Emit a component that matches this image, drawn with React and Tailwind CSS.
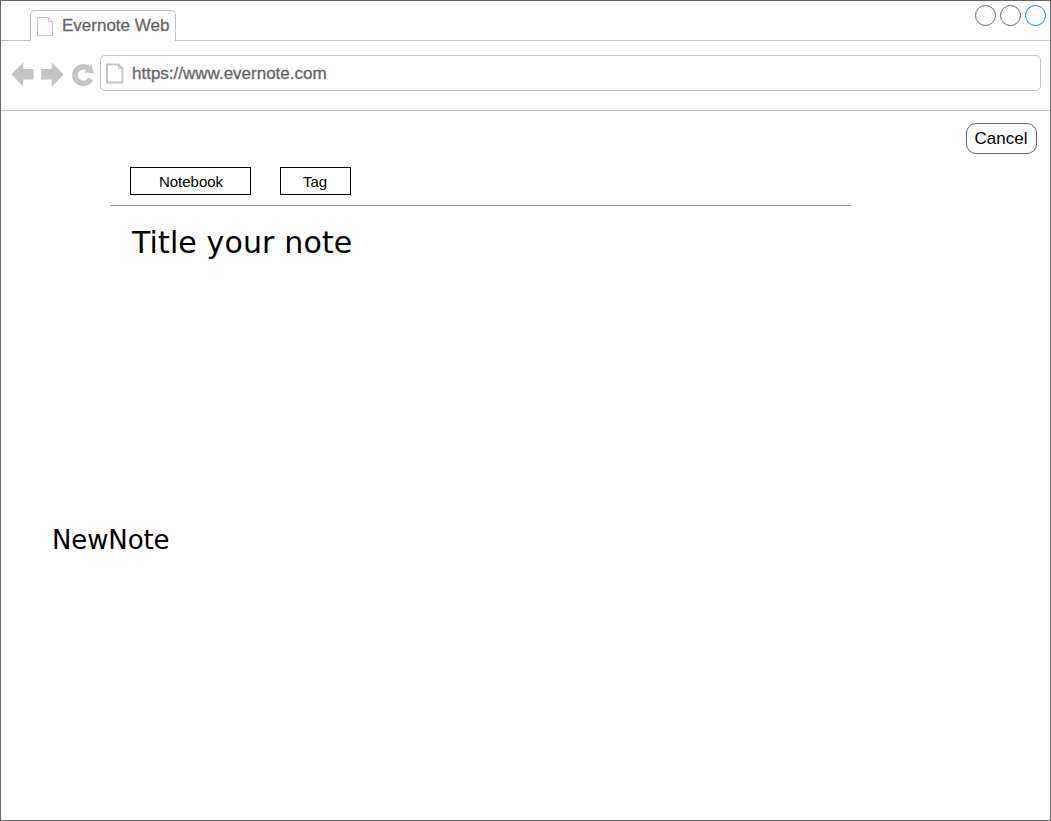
import React from "react";

function PageIcon({ className, strokeWidth }) {
  return (
    <svg className={className} viewBox="0 0 18 21" fill="none" stroke="#c4c4c4" strokeWidth={strokeWidth}>
      <path d="M1 1.5H12.5L16.5 5.5V19.5H1Z" />
      <path d="M12.5 1.5V5.5H16.5" strokeWidth="1.2" />
    </svg>
  );
}

function TabStrip() {
  return (
    <div className="flex h-10 shrink-0">
      <div className="w-[29px] shrink-0 border-b border-[#c4c4c4]" />
      <div className="mt-[9px] flex h-[31px] w-[146px] shrink-0 rounded-t-[5px] border border-b-0 border-[#c4c4c4]">
        <svg className="ml-[6px] mt-[6px] h-[20px] w-[17px] shrink-0" viewBox="0 0 17 20" fill="none" stroke="#c4c4c4">
          <path d="M0.5 0.5H11.5L15.5 4.5V18.5H0.5Z" />
          <path d="M11.5 0.5V4.5H15.5" />
        </svg>
        <span className="ml-[8px] mt-[5px] whitespace-nowrap text-[17px] leading-5 [-webkit-text-stroke:0.3px_#666]">Evernote Web</span>
      </div>
      <div className="flex flex-1 justify-end gap-1 border-b border-[#c4c4c4] pr-[4px] pt-[4px]">
        <div className="size-[21px] rounded-full border border-[#666]" />
        <div className="size-[21px] rounded-full border border-[#666]" />
        <div className="size-[21px] rounded-full border border-[#008cff]" />
      </div>
    </div>
  );
}

function AddressRow() {
  return (
    <div className="flex h-[70px] shrink-0 border-b border-[#c4c4c4] pl-[10px] pr-[9px] pt-[14px]">
      <svg className="mt-[7px] h-[26px] w-[84px] shrink-0" viewBox="11 62 84 26">
        <path d="M11.3 74.5L23.3 62.5V69H33.5V79.5H23.3V86.5Z" fill="#c4c4c4" />
        <path d="M63.7 74.5L51.7 62.5V69H41.2V79.5H51.7V86.5Z" fill="#c4c4c4" />
        <path d="M90.6 79A8.3 8.3 0 1 1 88.4 68.6" fill="none" stroke="#c4c4c4" strokeWidth="5.6" />
        <path d="M91.7 64.2L93.6 73.2L84 72.4Z" fill="#c4c4c4" />
      </svg>
      <div className="ml-[5px] flex h-9 flex-1 rounded-[5px] border border-[#c4c4c4]">
        <PageIcon className="ml-[5px] mt-[7px] h-[21px] w-[18px] shrink-0" strokeWidth="2" />
        <span className="ml-[8px] mt-[8px] text-[17px] leading-5 [-webkit-text-stroke:0.3px_#666]">https://www.evernote.com</span>
      </div>
    </div>
  );
}

export default function App() {
  return (
    <div className="flex h-[821px] w-[1051px] flex-col overflow-hidden border border-[#666] bg-white font-['Liberation_Sans',Arial,sans-serif] text-[#666]">
      <TabStrip />
      <AddressRow />
      <main className="flex flex-1 flex-col text-black">
        <div className="flex justify-end pr-[13px] pt-[12px]">
          <button className="h-[31px] w-[71px] rounded-[10px] border border-[#666] pr-px text-[17px] leading-5">Cancel</button>
        </div>
        <div className="ml-[109px] mt-[13px] flex h-[39px] w-[741px] gap-[29px] border-b border-[#999] pl-5">
          <button className="h-7 w-[121px] border border-black pl-px pt-[2px] text-[15px] leading-5">Notebook</button>
          <button className="h-7 w-[71px] border border-black pr-px pt-[2px] text-[15px] leading-5">Tag</button>
        </div>
        <h1 className="ml-[131px] mt-[19px] whitespace-nowrap font-['DejaVu_Sans',sans-serif] text-[30px] leading-9 tracking-[0.13px]">Title your note</h1>
        <p className="ml-[51px] mt-[263px] whitespace-nowrap font-['DejaVu_Sans',sans-serif] text-[26px] leading-8 tracking-[-0.12px]">NewNote</p>
      </main>
    </div>
  );
}
